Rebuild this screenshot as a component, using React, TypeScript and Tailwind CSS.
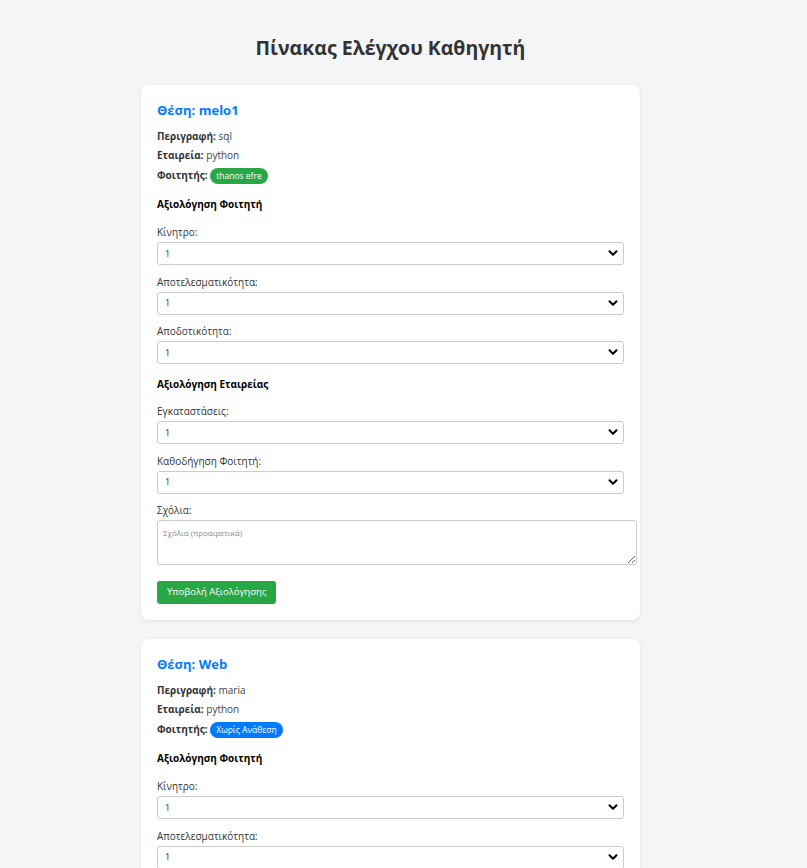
import { ChevronDown } from 'lucide-react';

type Position = {
  title: string;
  description: string;
  company: string;
  student: string | null;
};

const positions: Position[] = [
  { title: 'melo1', description: 'sql', company: 'python', student: 'thanos efre' },
  { title: 'Web', description: 'maria', company: 'python', student: null },
];

function SelectField({ label }: { label: string }) {
  return (
    <div className="mb-[9.5px]">
      <label className="block text-[10px] leading-[14px] text-[#333] mb-[3px]">{label}</label>
      <div className="relative">
        <select className="block w-full h-[23px] appearance-none rounded-[3px] border border-[#ccc] bg-white pl-[7px] text-[9px] text-[#333] outline-none">
          <option>1</option>
          <option>2</option>
          <option>3</option>
          <option>4</option>
          <option>5</option>
        </select>
        {/* arrow over the select */}
        <ChevronDown size={14} strokeWidth={3.5} className="pointer-events-none absolute right-[4px] top-[4px] text-black" />
      </div>
    </div>
  );
}

function PositionCard({ p }: { p: Position }) {
  return (
    <div className="mb-[19px] rounded-lg bg-white px-4 pt-4 pb-4 shadow-[0_1px_5px_rgba(0,0,0,0.08)]">
      <h3 className="text-[13px] leading-[18px] font-bold text-[#007bff] mb-[10px]">Θέση: {p.title}</h3>
      <p className="text-[10px] leading-[14px] text-[#444] mb-[5px]">
        <b className="text-[#333]">Περιγραφή:</b> {p.description}
      </p>
      <p className="text-[10px] leading-[14px] text-[#444] mb-[5px]">
        <b className="text-[#333]">Εταιρεία:</b> {p.company}
      </p>
      <p className="text-[10px] leading-[16px] text-[#444]">
        <b className="text-[#333]">Φοιτητής:</b>{' '}
        {p.student ? (
          <span className="inline-block rounded-full bg-[#28a745] px-[6px] text-[8.5px] leading-[16px] text-white">{p.student}</span>
        ) : (
          <span className="inline-block rounded-full bg-[#007bff] px-[6px] text-[8.5px] leading-[16px] text-white">Χωρίς Ανάθεση</span>
        )}
      </p>

      <h4 className="mt-[13px] mb-[14px] text-[10px] leading-[14px] font-bold text-black">Αξιολόγηση Φοιτητή</h4>
      <SelectField label="Κίνητρο:" />
      <SelectField label="Αποτελεσματικότητα:" />
      <SelectField label="Αποδοτικότητα:" />

      <h4 className="mt-[13px] mb-[13px] text-[10px] leading-[14px] font-bold text-black">Αξιολόγηση Εταιρείας</h4>
      <SelectField label="Εγκαταστάσεις:" />
      <SelectField label="Καθοδήγηση Φοιτητή:" />

      <label className="block text-[10px] leading-[14px] text-[#333] mb-[3px]">Σχόλια:</label>
      <textarea
        placeholder="Σχόλια (προαιρετικά)"
        className="block w-[480px] h-[45px] rounded-[3px] border border-[#ccc] px-[5px] py-[6px] text-[8px] text-[#333] placeholder:text-[#888] outline-none"
      />

      <button className="mt-4 h-[23px] rounded-[3px] bg-[#28a745] px-[10px] text-[9.5px] text-white">
        Υποβολή Αξιολόγησης
      </button>
    </div>
  );
}

export default function App() {
  return (
    <div className="min-h-[868px] bg-[#f4f5f7] pr-[26px] pt-[34px] font-['Open_Sans','Noto_Sans',sans-serif]">
      <h1 className="text-center text-[19.5px] leading-[28px] font-bold text-[#333] mb-[23px]">Πίνακας Ελέγχου Καθηγητή</h1>
      <div className="mx-auto w-[499px]">
        {positions.map((p) => (
          <PositionCard key={p.title} p={p} />
        ))}
      </div>
    </div>
  );
}
